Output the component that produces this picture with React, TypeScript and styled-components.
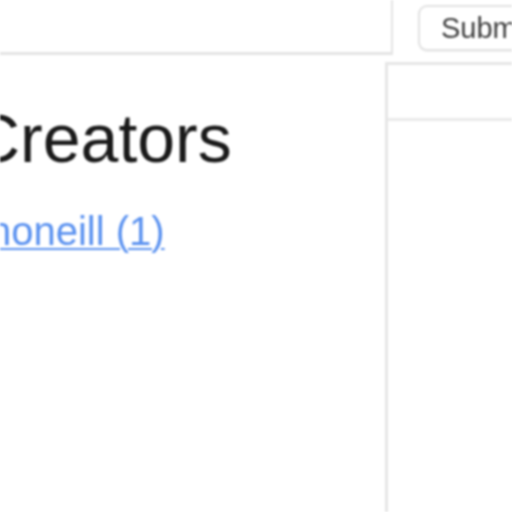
import React from "react";
import styled, { createGlobalStyle } from "styled-components";

const GlobalStyle = createGlobalStyle`
  html, body {
    margin: 0;
    padding: 0;
    background: #ffffff;
    overflow: hidden;
  }
  body {
    font-family: "Liberation Sans", Arial, Helvetica, sans-serif;
  }
`;

const Page = styled.div`
  width: 512px;
  height: 512px;
  overflow: hidden;
  background: #ffffff;
  filter: blur(1px);
`;

const Canvas = styled.div`
  display: flex;
  flex-direction: column;
  width: 640px;
  margin-left: -40px;
  margin-top: -10px;
`;

const TopBar = styled.div`
  display: flex;
  align-items: flex-start;
`;

const SearchInput = styled.div`
  box-sizing: border-box;
  width: 433px;
  height: 65px;
  border: 2px solid #e4e4e4;
  border-bottom-width: 3px;
  background: #ffffff;
`;

const SubmitButton = styled.button`
  box-sizing: border-box;
  margin-left: 25px;
  margin-top: 15px;
  height: 46px;
  padding: 0 0 0 21px;
  width: 140px;
  text-align: left;
  font-family: "Liberation Sans", Arial, sans-serif;
  font-size: 29px;
  line-height: 1;
  color: #3e3e3e;
  background: #ffffff;
  border: 2px solid #e2e2e2;
  border-radius: 9px;
  box-shadow: 0 1px 1px rgba(0, 0, 0, 0.06);
`;

const Body = styled.div`
  display: flex;
  margin-top: 7px;
  height: 480px;
`;

const LeftColumn = styled.div`
  width: 425px;
  display: flex;
  flex-direction: column;
  align-items: flex-start;
`;

const Heading = styled.h1`
  margin: 42px 0 0 11px;
  font-size: 68px;
  line-height: 1;
  font-weight: 400;
  color: #1a1a1a;
`;

const CreatorLink = styled.a`
  margin: 39px 0 0 29px;
  font-size: 40px;
  line-height: 1;
  color: #5b92f0;
  text-decoration: underline;
  text-decoration-thickness: 2px;
  text-underline-offset: 3px;
`;

const SidePanel = styled.div`
  flex: 1;
  border-left: 3px solid #e6e6e6;
  border-top: 3px solid #e6e6e6;
  display: flex;
  flex-direction: column;
`;

const PanelHeader = styled.div`
  height: 53px;
  border-bottom: 3px solid #eaeaea;
`;

export default function App() {
  return (
    <>
      <GlobalStyle />
      <Page>
        <Canvas>
          <TopBar>
            <SearchInput />
            <SubmitButton>Submit</SubmitButton>
          </TopBar>
          <Body>
            <LeftColumn>
              <Heading>Creators</Heading>
              <CreatorLink href="#">honeill (1)</CreatorLink>
            </LeftColumn>
            <SidePanel>
              <PanelHeader />
            </SidePanel>
          </Body>
        </Canvas>
      </Page>
    </>
  );
}
